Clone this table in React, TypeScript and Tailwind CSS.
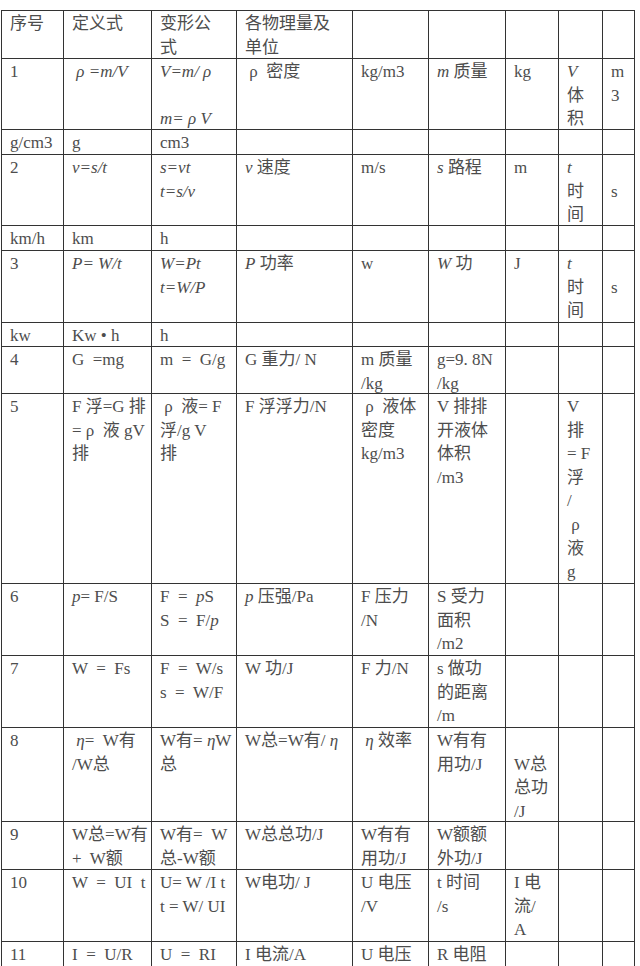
import type { ReactNode } from "react";

const It = ({ children }: { children: ReactNode }) => <span className="italic">{children}</span>;

// each cell is a list of lines; "" is an empty line
type Cell = ReactNode[];

const rows: Cell[][] = [
  [["序号"], ["定义式"], ["变形公", "式"], ["各物理量及", "单位"], [], [], [], [], []],
  [
    ["1"],
    [<> <It>ρ =m/V</It></>],
    [<It>V=m/ ρ</It>, "", <It>m= ρ V</It>],
    [" ρ  密度"],
    ["kg/m3"],
    [<><It>m</It> 质量</>],
    ["kg"],
    [<It>V</It>, "体", "积"],
    ["m", "3"],
  ],
  [["g/cm3"], ["g"], ["cm3"], [], [], [], [], [], []],
  [
    ["2"],
    [<It>v=s/t</It>],
    [<It>s=vt</It>, <It>t=s/v</It>],
    [<><It>v</It> 速度</>],
    ["m/s"],
    [<><It>s</It> 路程</>],
    ["m"],
    [<It>t</It>, "时", "间"],
    ["", "s"],
  ],
  [["km/h"], ["km"], ["h"], [], [], [], [], [], []],
  [
    ["3"],
    [<It>P= W/t</It>],
    [<It>W=Pt</It>, <It>t=W/P</It>],
    [<><It>P</It> 功率</>],
    ["w"],
    [<><It>W</It> 功</>],
    ["J"],
    [<It>t</It>, "时", "间"],
    ["", "s"],
  ],
  [["kw"], ["Kw • h"], ["h"], [], [], [], [], [], []],
  [["4"], ["G  =mg"], ["m  =  G/g"], ["G 重力/ N"], ["m 质量", "/kg"], ["g=9. 8N", "/kg"], [], [], []],
  [
    ["5"],
    ["F 浮=G 排", "= ρ  液 gV", "排"],
    [" ρ  液= F", "浮/g V", "排"],
    ["F 浮浮力/N"],
    [" ρ  液体", "密度", "kg/m3"],
    ["V 排排", "开液体", "体积", "/m3"],
    [],
    ["V", "排", "= F", "浮", "/", " ρ", "液", "g"],
    [],
  ],
  [
    ["6"],
    [<><It>p</It>= F/S</>],
    [<>F  =  <It>p</It>S</>, <>S  =  F/<It>p</It></>],
    [<><It>p</It> 压强/Pa</>],
    ["F 压力", "/N"],
    ["S 受力", "面积", "/m2"],
    [],
    [],
    [],
  ],
  [["7"], ["W  =  Fs"], ["F  =  W/s", "s  =  W/F"], ["W 功/J"], ["F 力/N"], ["s 做功", "的距离", "/m"], [], [], []],
  [
    ["8"],
    [<> <It>η</It>=  W有</>, "/W总"],
    [<>W有= <It>η</It>W</>, "总"],
    [<>W总=W有/ <It>η</It></>],
    [<> <It>η</It> 效率</>],
    ["W有有", "用功/J"],
    ["", "W总", "总功", "/J"],
    [],
    [],
  ],
  [["9"], ["W总=W有", "+  W额"], ["W有=  W", "总-W额"], ["W总总功/J"], ["W有有", "用功/J"], ["W额额", "外功/J"], [], [], []],
  [["10"], ["W  =  UI  t"], ["U= W /I t", "t = W/ UI"], ["W电功/ J"], ["U 电压", "/V"], ["t 时间", "/s"], ["I 电", "流/", "A"], [], []],
  [["11"], ["I  =  U/R"], ["U  =  RI"], ["I 电流/A"], ["U 电压"], ["R 电阻"], [], [], []],
];

export default function App() {
  return (
    <div className="h-[966px] overflow-hidden bg-white pt-[10px] pl-px">
      <div
        className="grid w-[634px] grid-cols-[61px_87px_84px_115px_75px_76px_52px_43px_31px] grid-rows-[47px_70px_24px_70px_24px_71px_23px_46px_189px_71px_71px_93px_47px_71px_60px] gap-px border border-[#333] bg-[#333] text-[17px] text-[#4d4d4d]"
        style={{ fontFamily: '"Liberation Serif", "Noto Sans CJK SC", serif' }}
      >
        {rows.map((row, r) =>
          row.map((cell, c) => (
            <div key={`${r}-${c}`} className="overflow-hidden bg-white pl-2 pt-px">
              {cell.map((line, i) => (
                <div key={i} className="h-[23.6px] whitespace-pre leading-[23.6px]">
                  {line}
                </div>
              ))}
            </div>
          ))
        )}
      </div>
    </div>
  );
}
